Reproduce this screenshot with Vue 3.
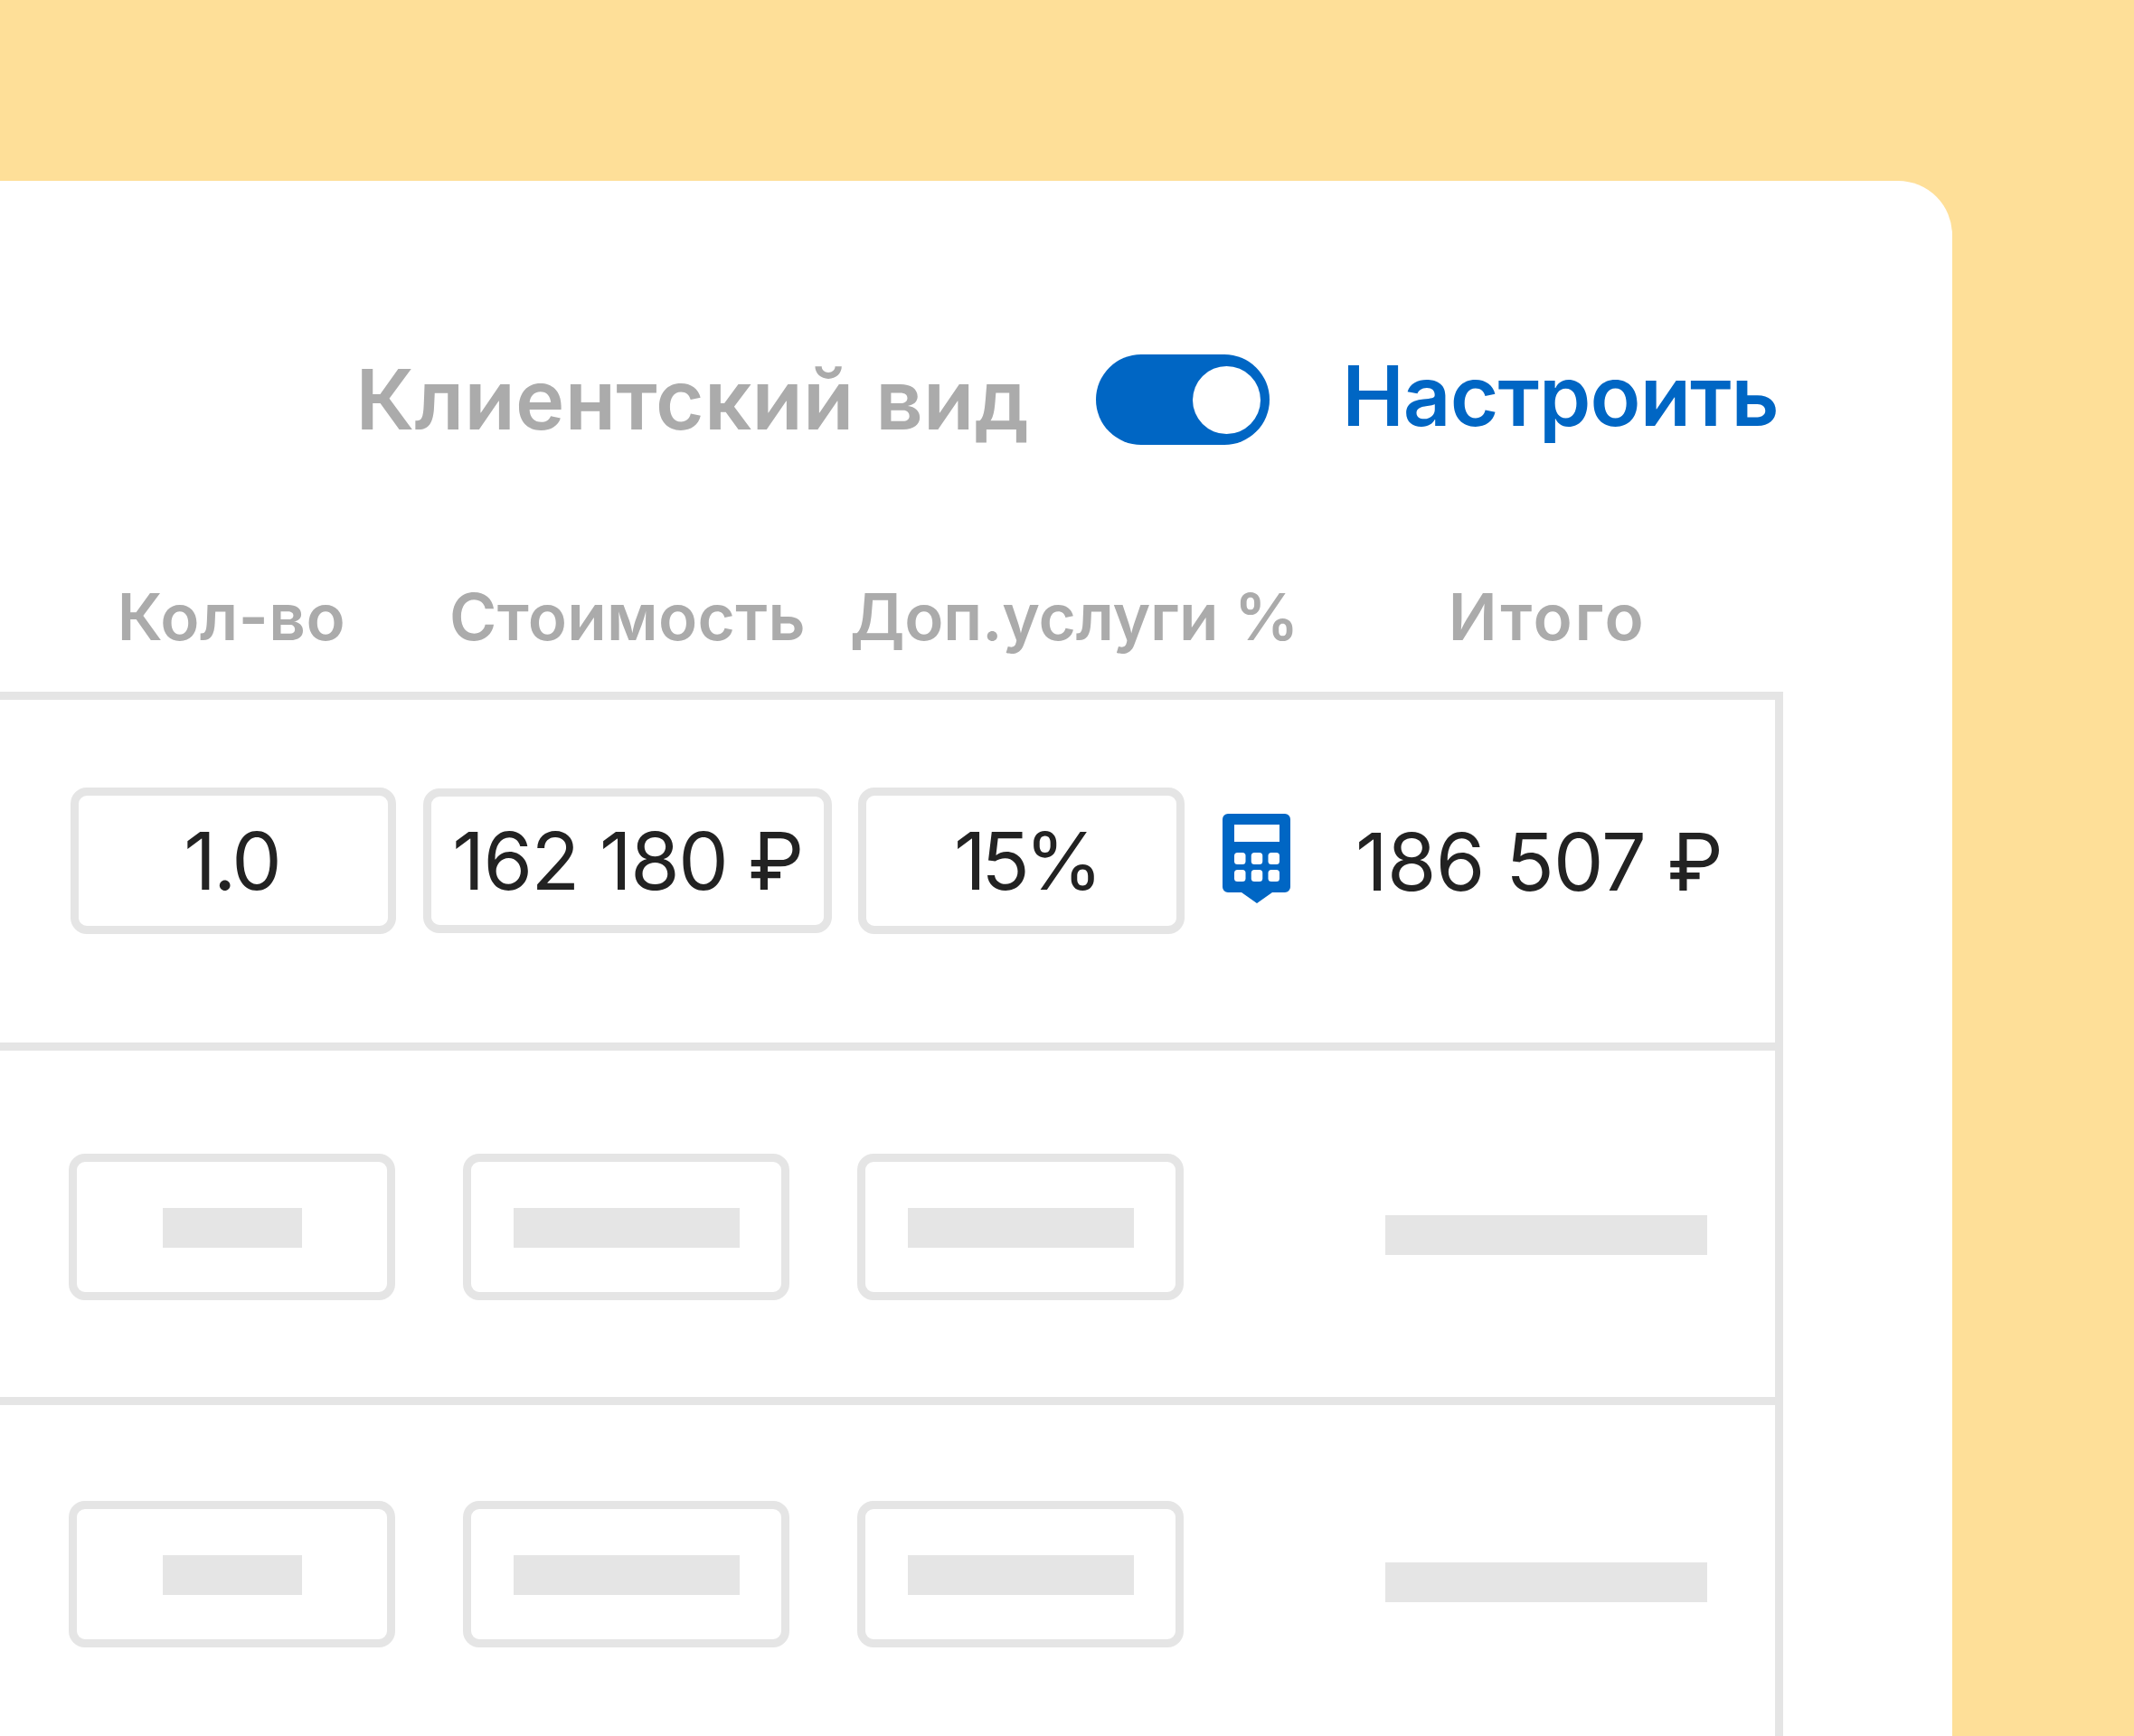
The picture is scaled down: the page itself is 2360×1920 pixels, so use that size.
<script setup>
const heads = [
  { text: 'Кол-во', cls: 'h1' },
  { text: 'Стоимость', cls: 'h2' },
  { text: 'Доп.услуги %', cls: 'h3' },
  { text: 'Итого', cls: 'h4' }
]
const skeletonRows = ['row2', 'row3']
const keys = [0, 1, 2, 3, 4, 5]
</script>

<template>
  <div class="page">
    <section class="card">
      <div class="toolbar">
        <span class="client-label">Клиентский вид</span>
        <span class="toggle"><span class="knob"></span></span>
        <a class="setup">Настроить</a>
      </div>

      <div class="heads">
        <span v-for="h in heads" :key="h.text" class="head" :class="h.cls">{{ h.text }}</span>
      </div>

      <div class="table">
        <div class="row row1">
          <div class="field f1">1.0</div>
          <div class="field f2">162 180 ₽</div>
          <div class="field f3">15%</div>
          <svg class="calc" viewBox="0 0 75 99" width="75" height="99" aria-hidden="true">
            <path fill="#0066c4" d="M6 0H69A6 6 0 0 1 75 6V81A6 6 0 0 1 69 87H55L38 99L21 87H6A6 6 0 0 1 0 81V6A6 6 0 0 1 6 0Z" />
            <rect x="13" y="12" width="50" height="19" fill="#fff" />
            <rect v-for="k in keys" :key="k" :x="13 + (k % 3) * 18.75" :y="k < 3 ? 43 : 62" width="12.5" height="13" rx="3.5" fill="#fff" />
          </svg>
          <div class="total">186 507 ₽</div>
        </div>
        <div v-for="r in skeletonRows" :key="r" class="row" :class="r">
          <div class="box b1"><i class="bar bar-s"></i></div>
          <div class="box b2"><i class="bar bar-m"></i></div>
          <div class="box b3"><i class="bar bar-m"></i></div>
          <i class="bar bar-total"></i>
        </div>
      </div>
    </section>
  </div>
</template>

<style scoped>
.page {
  width: 2360px;
  height: 1920px;
  overflow: hidden;
  box-sizing: border-box;
  padding-top: 200px;
  background: #fedf98;
  font-family: Inter, "Noto Sans", sans-serif;
}
.card {
  width: 2159px;
  height: 1720px;
  background: #fff;
  border-top-right-radius: 60px;
  overflow: hidden;
}
.toolbar {
  display: flex;
  align-items: center;
  justify-content: flex-end;
  height: 100px;
  padding: 192px 192px 0 0;
}
.client-label {
  font-size: 92px;
  line-height: 100px;
  font-weight: 600;
  color: #ababab;
  letter-spacing: 0.25px;
  margin-right: 74px;
}
.toggle {
  display: flex;
  align-items: center;
  justify-content: flex-end;
  box-sizing: border-box;
  width: 192px;
  height: 100px;
  padding-right: 10px;
  border-radius: 50px;
  background: #0066c4;
}
.knob {
  width: 75px;
  height: 75px;
  border-radius: 50%;
  background: #fff;
}
.setup {
  margin-left: 80px;
  font-size: 92px;
  line-height: 100px;
  font-weight: 600;
  color: #0066c4;
  letter-spacing: -0.9px;
  transform: translateY(-4px);
}
.heads {
  display: flex;
  align-items: center;
  box-sizing: border-box;
  height: 273px;
  padding-top: 106px;
}
.head {
  flex: none;
  font-size: 71px;
  line-height: 80px;
  font-weight: 600;
  color: #ababab;
  text-align: center;
  white-space: nowrap;
}
.h1 { width: 360px; margin-left: 76px; letter-spacing: 0.5px; }
.h2 { width: 440px; margin-left: 38px; letter-spacing: 0.33px; }
.h3 { width: 488px; margin-left: 26px; letter-spacing: -0.25px; }
.h4 { width: 400px; margin-left: 83px; letter-spacing: 2.7px; }
.table {
  width: 1972px;
  box-sizing: border-box;
  height: 1200px;
  border-top: 9px solid #e5e5e5;
  border-right: 9px solid #e5e5e5;
}
.row {
  display: flex;
  align-items: flex-start;
  border-bottom: 9px solid #e5e5e5;
  box-sizing: content-box;
}
.row1 { height: 282px; padding-top: 97px; }
.row2 { height: 269px; padding-top: 114px; }
.row3 { height: 400px; padding-top: 106px; border-bottom: 0; }
.field, .box {
  flex: none;
  display: flex;
  align-items: center;
  justify-content: center;
  box-sizing: border-box;
  height: 162px;
  border: 9px solid #e5e5e5;
  border-radius: 18px;
  background: #fff;
  color: #222;
}
.field {
  font-size: 88px;
  font-weight: 400;
  letter-spacing: -1.5px;
}
.f1 { width: 360px; margin-left: 78px; padding-right: 4px; letter-spacing: -3px; }
.f2 { width: 452px; height: 160px; margin: 1px 0 0 30px; }
.f3 { width: 361px; margin-left: 29px; padding-left: 10px; letter-spacing: -5.5px; }
.calc { flex: none; margin: 29px 0 0 42px; }
.total {
  margin: 27px 0 0 72px;
  font-size: 88px;
  line-height: 110px;
  font-weight: 400;
  letter-spacing: -0.8px;
  color: #222;
  white-space: nowrap;
}
.bar { display: block; background: #e5e5e5; flex: none; height: 44px; }
.box .bar { margin-top: 1px; }
.bar-s { width: 154px; }
.bar-m { width: 250px; }
.bar-total { width: 356px; margin: 68px 0 0 223px; }
.b1 { width: 361px; margin-left: 76px; }
.b2 { width: 361px; margin-left: 75px; }
.b3 { width: 361px; margin-left: 75px; }
</style>

<style>
html, body { margin: 0; padding: 0; }
</style>
